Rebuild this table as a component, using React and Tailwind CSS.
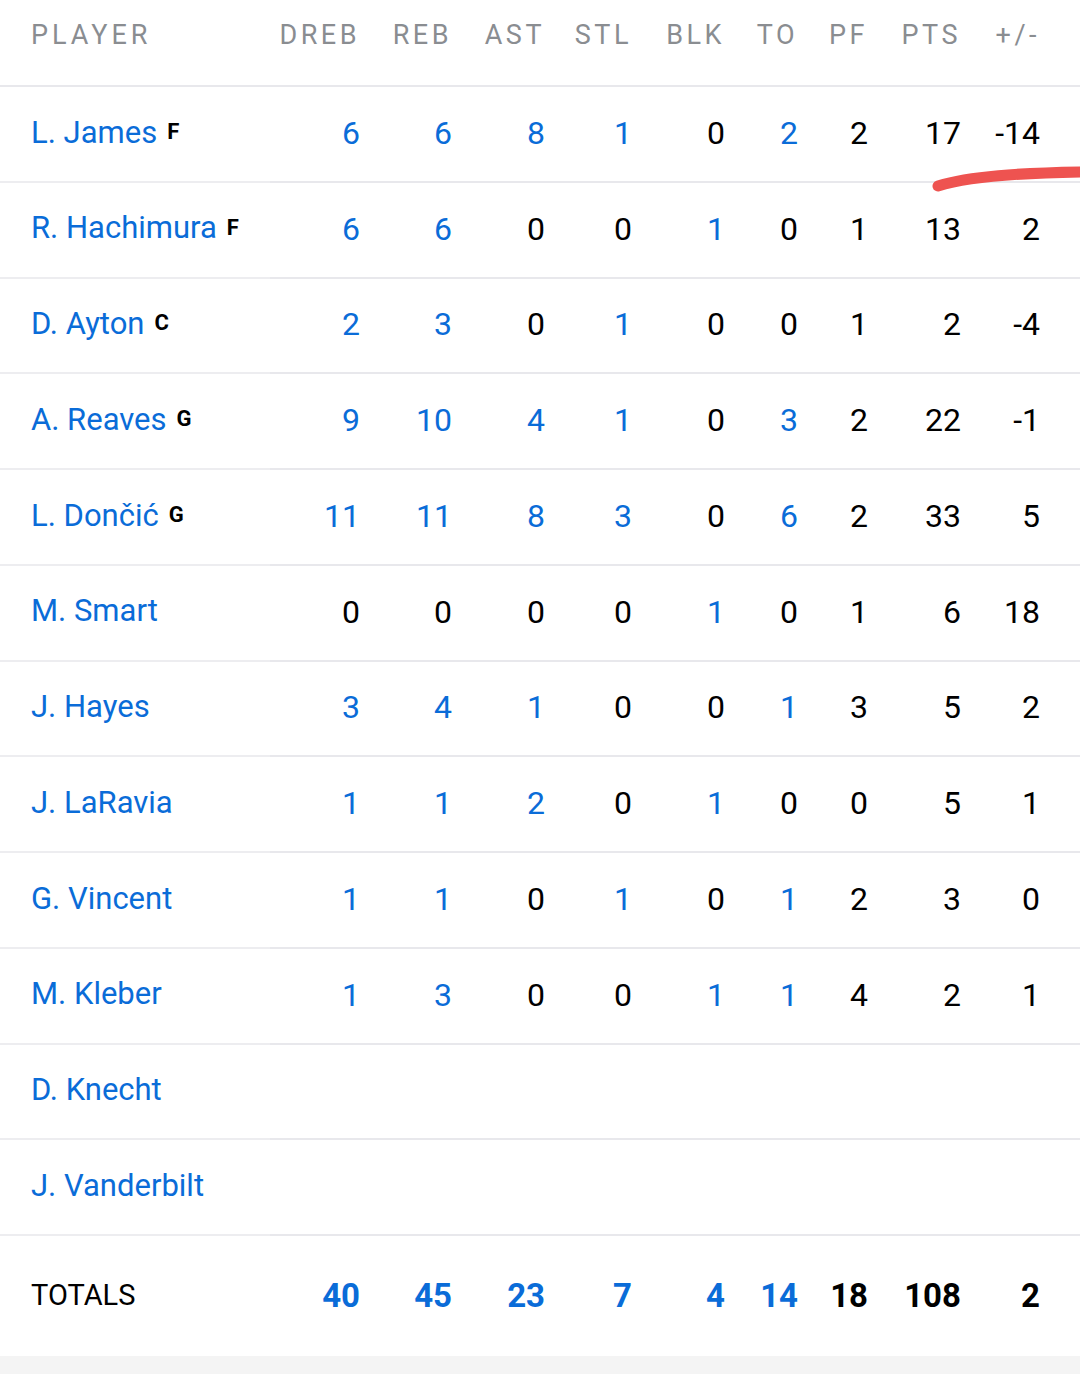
import React from "react";

const BLUE = "text-[#0a6cd8]";

const cols = ["DREB", "REB", "AST", "STL", "BLK", "TO", "PF", "PTS", "+/-"];
const widths = ["w-[90px]", "w-[92px]", "w-[93px]", "w-[87px]", "w-[93px]", "w-[73px]", "w-[70px]", "w-[93px]", "w-[79px]"];

const players = [
  { name: "L. James", pos: "F", stats: [6, 6, 8, 1, 0, 2, 2, 17, -14] },
  { name: "R. Hachimura", pos: "F", stats: [6, 6, 0, 0, 1, 0, 1, 13, 2] },
  { name: "D. Ayton", pos: "C", stats: [2, 3, 0, 1, 0, 0, 1, 2, -4] },
  { name: "A. Reaves", pos: "G", stats: [9, 10, 4, 1, 0, 3, 2, 22, -1] },
  { name: "L. Dončić", pos: "G", stats: [11, 11, 8, 3, 0, 6, 2, 33, 5] },
  { name: "M. Smart", stats: [0, 0, 0, 0, 1, 0, 1, 6, 18] },
  { name: "J. Hayes", stats: [3, 4, 1, 0, 0, 1, 3, 5, 2] },
  { name: "J. LaRavia", stats: [1, 1, 2, 0, 1, 0, 0, 5, 1] },
  { name: "G. Vincent", stats: [1, 1, 0, 1, 0, 1, 2, 3, 0] },
  { name: "M. Kleber", stats: [1, 3, 0, 0, 1, 1, 4, 2, 1] },
  { name: "D. Knecht" },
  { name: "J. Vanderbilt" },
];

const totals = [40, 45, 23, 7, 4, 14, 18, 108, 2];

const PlayerRow = ({ player }) => (
  <div className="flex h-[95.75px]">
    <div className="w-[270px] flex items-center pl-[31px] pb-[2px] border-b-2 border-[#ededf0]">
      <span className={`text-[31px] ${BLUE}`}>{player.name}</span>
      {player.pos && (
        <span className="ml-[10px] text-[22px] font-bold text-black -mt-[3px]">{player.pos}</span>
      )}
    </div>
    <div className="flex-1 flex items-center pr-[40px] pb-[2px] border-b-2 border-[#e8e8ec]">
      {player.stats &&
        player.stats.map((v, i) => (
          <span
            key={i}
            className={`${widths[i]} text-right text-[32px] ${i < 6 && v > 0 ? BLUE : "text-black"}`}
          >
            {v}
          </span>
        ))}
    </div>
  </div>
);

export default function App() {
  return (
    <div className="w-[1080px] h-[1374px] bg-[#f4f4f4] font-['Roboto',sans-serif] relative overflow-hidden">
      <div className="bg-white">
        <div className="flex h-[87px] border-b-2 border-[#e8e8ec]">
          <div className="w-[270px] flex items-center pl-[31px] -mt-[15px]">
            <span className="text-[27px] tracking-[4px] text-[#8a8d91]">PLAYER</span>
          </div>
          <div className="flex-1 flex items-center pr-[40px] -mt-[15px]">
            {cols.map((c, i) => (
              <span key={c} className={`${widths[i]} text-right text-[27px] tracking-[3.5px] text-[#8a8d91]`}>
                {c}
              </span>
            ))}
          </div>
        </div>

        {players.map((p) => (
          <PlayerRow key={p.name} player={p} />
        ))}

        <div className="flex h-[120px] items-center">
          <div className="w-[270px] pl-[31px]">
            <span className="text-[29px] text-black">TOTALS</span>
          </div>
          <div className="flex-1 flex pr-[40px]">
            {totals.map((v, i) => (
              <span key={i} className={`${widths[i]} text-right text-[33px] font-bold ${i < 6 ? BLUE : "text-black"}`}>
                {v}
              </span>
            ))}
          </div>
        </div>
      </div>

      <svg className="absolute left-[920px] top-[160px]" width="160" height="40" viewBox="0 0 160 40">
        <path d="M18 26 C 50 16, 100 13, 160 12" stroke="#ee5350" strokeWidth="11" strokeLinecap="round" fill="none" />
      </svg>
    </div>
  );
}
